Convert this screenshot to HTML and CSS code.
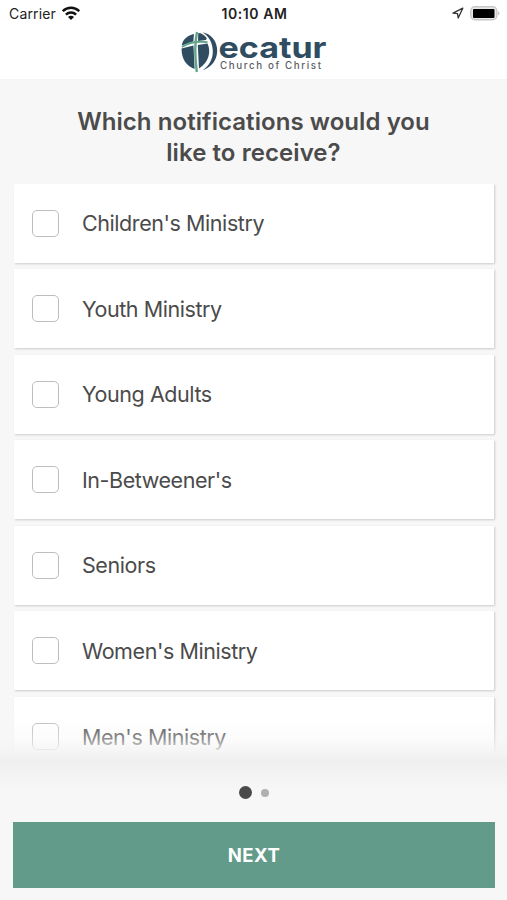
FILE: index.html
```html
<!DOCTYPE html>
<html lang="en">
<head>
<meta charset="utf-8">
<title>Notifications</title>
<link rel="stylesheet" href="styles.css">
</head>
<body>
<main class="screen">
  <header class="header">
    <div class="status">
      <div class="status-left">
        <span class="carrier">Carrier</span>
        <svg class="wifi" width="18" height="14" viewBox="0 0 18 14"><g fill="none" stroke="#111" stroke-width="2.5"><path d="M.8 5.2C5.4.6 12.6.6 17.2 5.2"/><path d="M3.9 8.6C6.8 5.8 11.2 5.8 14.1 8.6"/></g><path d="M9 14L6 11C7.7 9.4 10.3 9.4 12 11Z" fill="#111"/></svg>
      </div>
      <span class="time">10:10 AM</span>
      <div class="status-right">
        <svg width="12" height="12" viewBox="0 0 12 12"><path d="M10.8 1.2L1 6.2L5.5 6.6L6.2 11Z" fill="none" stroke="#333" stroke-width="1.3" stroke-linejoin="round"/></svg>
        <svg class="battery" width="31" height="15" viewBox="0 0 31 15"><rect x=".8" y=".8" width="26" height="13" rx="4" fill="#e8e8e8" stroke="#c8c8c8" stroke-width="1.4"/><rect x="3" y="3" width="21.5" height="9" rx="1" fill="#000"/><path d="M28.3 5.2Q30.5 7.4 28.3 9.6Z" fill="#aaa"/></svg>
      </div>
    </div>
    <svg class="logo" width="150" height="46" viewBox="180 28 150 46">
      <g fill="#304c61">
        <path d="M194 34C186.5 36 182.3 40 181.8 45.5L193.3 41.5Z"/>
        <path d="M181.5 48.5L193.5 45.5L194.6 69C187 66.5 181.5 59.5 181.5 48.5Z"/>
        <path d="M198.3 33C201.5 33 204.5 35 206.8 38.2L206 40L198 41Z"/>
        <path d="M197.8 45L207.5 43.5C211.5 52 208.5 62.5 199 68.5Z"/>
        <path d="M202.5 32.3C211.5 34 217.3 41.5 217.2 51C217 60 211.5 67.5 202.5 70.3C209.5 65.5 213 59 212.8 51C212.6 43 209.3 36.5 202.5 32.3Z"/>
      </g>
      <g fill="none" stroke="#62a58b">
        <path d="M197 32C194.6 43 195 58 196.8 72" stroke-width="2.4"/>
        <path d="M182 47C188.5 42.8 198 41 207.5 42.2" stroke-width="1.9"/>
      </g>
      <text class="logo-name" x="218.5" y="58" textLength="108" lengthAdjust="spacingAndGlyphs">ecatur</text>
      <text class="logo-sub" x="220" y="69.2" textLength="101" lengthAdjust="spacing">Church of Christ</text>
    </svg>
  </header>
  <h1 class="title">Which notifications would you<br>like to receive?</h1>
  <div class="list">
    <label class="row"><span class="box"></span><span class="name">Children's Ministry</span></label>
    <label class="row"><span class="box"></span><span class="name">Youth Ministry</span></label>
    <label class="row"><span class="box"></span><span class="name">Young Adults</span></label>
    <label class="row"><span class="box"></span><span class="name">In-Betweener's</span></label>
    <label class="row"><span class="box"></span><span class="name">Seniors</span></label>
    <label class="row"><span class="box"></span><span class="name">Women's Ministry</span></label>
    <label class="row"><span class="box"></span><span class="name">Men's Ministry</span></label>
    <div class="fade"></div>
  </div>
  <footer class="footer">
    <div class="dots"><span class="dot active"></span><span class="dot"></span></div>
    <button class="next">NEXT</button>
  </footer>
</main>
</body>
</html>
```
FILE: styles.css
```css
* { box-sizing: border-box; }
body { margin: 0; background: #f7f7f7; font-family: Inter, "Liberation Sans", sans-serif; color: #4b4b4b; }
.screen { height: 900px; display: flex; flex-direction: column; overflow: hidden; }
.header { height: 79px; flex: none; background: #fff; box-shadow: 0 0 2px rgba(0,0,0,.04); display: flex; flex-direction: column; align-items: center; }
.status { width: 100%; height: 28px; display: grid; grid-template-columns: 1fr auto 1fr; align-items: center; padding: 0 7px 0 9px; font-size: 14px; color: #222; }
.status-left { display: flex; align-items: center; gap: 6px; }
.carrier { letter-spacing: .15px; margin-top: -1px; }
.wifi { margin-top: -3px; }
.time { font-weight: 600; letter-spacing: .55px; margin-top: -1px; }
.status-right { display: flex; align-items: center; justify-content: flex-end; gap: 6px; margin-top: -2px; margin-right: -1px; }
.logo { display: block; margin-left: 3px; overflow: visible; }
.logo-name { font: 700 29.5px Inter, sans-serif; fill: #304c61; }
.logo-sub { font: 500 9.8px Inter, sans-serif; fill: #5c6066; }
.title { margin: 27px 0 15.5px; text-align: center; font-size: 24px; line-height: 31px; font-weight: 600; letter-spacing: .07px; flex: none; }
.list { position: relative; height: 577.5px; flex: none; overflow: hidden; padding: 0 13px 0 14px; }
.row { display: flex; align-items: center; height: 79px; margin: 0 0 6.6px; padding-left: 18px; gap: 23px; background: #fff; box-shadow: 1px 1px 2px rgba(0,0,0,.18); font-size: 21.5px; }
.name { letter-spacing: -.43px; }
.box { width: 27px; height: 27px; border: 1.5px solid #bdbdbd; border-radius: 5px; flex: none; }
.fade { position: absolute; left: 0; right: 0; bottom: 0; height: 44px; background: linear-gradient(rgba(247,247,247,0), rgba(247,247,247,.4) 50%, #f3f3f3 85%, #efefef); }
.footer { flex: 1; padding: 0 12px 12px 13px; background: linear-gradient(#efefef, #f7f7f7 30px); display: flex; flex-direction: column; }
.dots { height: 61px; padding-top: 2px; display: flex; align-items: center; justify-content: center; gap: 9px; }
.dot { width: 8px; height: 8px; border-radius: 50%; background: #b0b0b0; }
.dot.active { width: 13px; height: 13px; background: #4a4a4a; }
.next { height: 66px; border: 0; padding: 0 0 1px; background: #629b89; color: #fff; font: 700 18.5px Inter, sans-serif; letter-spacing: .5px; }
```
